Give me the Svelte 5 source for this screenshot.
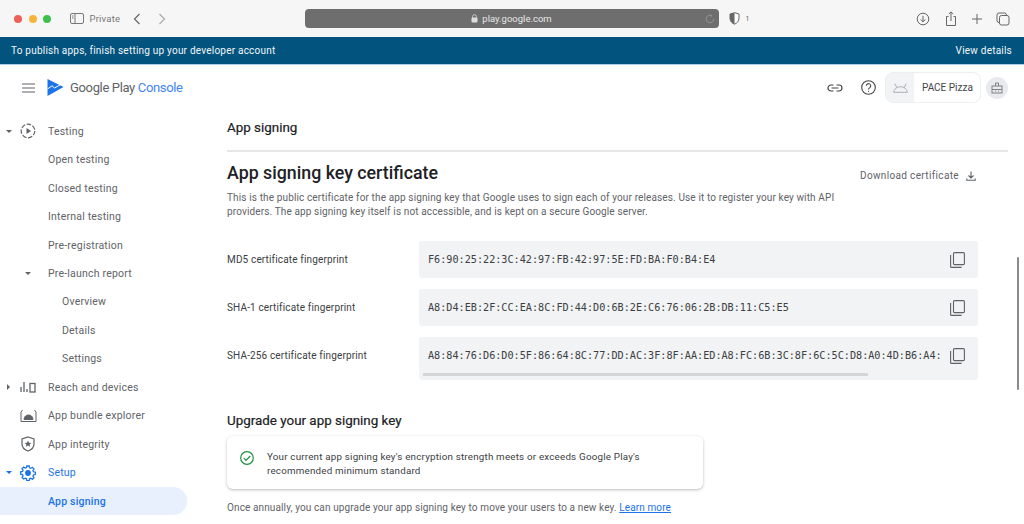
<script>
  // sidebar rows: arrow = down/right/none, icon = key of the svg to draw
  const nav = [
    { label: "Testing", arrow: "down", icon: "testing" },
    { label: "Open testing" },
    { label: "Closed testing" },
    { label: "Internal testing" },
    { label: "Pre-registration" },
    { label: "Pre-launch report", icon: "caret" },
    { label: "Overview", sub: true },
    { label: "Details", sub: true },
    { label: "Settings", sub: true },
    { label: "Reach and devices", arrow: "right", icon: "reach" },
    { label: "App bundle explorer", icon: "bundle" },
    { label: "App integrity", icon: "integrity" },
    { label: "Setup", arrow: "down", icon: "setup", blue: true },
    { label: "App signing", active: true }
  ];

  const prints = [
    { label: "MD5 certificate fingerprint", value: "F6:90:25:22:3C:42:97:FB:42:97:5E:FD:BA:F0:B4:E4" },
    { label: "SHA-1 certificate fingerprint", value: "A8:D4:EB:2F:CC:EA:8C:FD:44:D0:6B:2E:C6:76:06:2B:DB:11:C5:E5" },
    {
      label: "SHA-256 certificate fingerprint",
      value: "A8:84:76:D6:D0:5F:86:64:8C:77:DD:AC:3F:8F:AA:ED:A8:FC:6B:3C:8F:6C:5C:D8:A0:4D:B6:A4:",
      scroll: true
    }
  ];
</script>

<div class="page">
  <header class="toolbar">
    <span class="light red"></span>
    <span class="light amber"></span>
    <span class="light green"></span>
    <svg class="t-side" width="14" height="12" viewBox="0 0 14 12" fill="none" stroke="#777" stroke-width="1">
      <rect x="0.5" y="0.5" width="13" height="10" rx="1.5" />
      <path d="M5 .5v10M2 3h1.5M2 5h1.5" />
    </svg>
    <span class="private">Private</span>
    <svg class="t-back" width="8" height="12" viewBox="0 0 8 12" fill="none" stroke="#666" stroke-width="1.2">
      <path d="M6.5 1 1.5 6l5 5" />
    </svg>
    <svg class="t-fwd" width="8" height="12" viewBox="0 0 8 12" fill="none" stroke="#aaa" stroke-width="1.2">
      <path d="M1.5 1l5 5-5 5" />
    </svg>
    <div class="address">
      <svg width="7" height="9" viewBox="0 0 7 9" fill="#ddd">
        <rect x="0.5" y="3.5" width="6" height="5" rx="1" />
        <path d="M1.6 4V2.6a1.9 1.9 0 0 1 3.8 0V4" fill="none" stroke="#ddd" stroke-width=".8" />
      </svg>
      <span>play.google.com</span>
      <svg class="reload" width="10" height="10" viewBox="0 0 10 10" fill="none" stroke="#9a9a9a" stroke-width=".9">
        <path d="M8.8 5a3.8 3.8 0 1 1-2-3.4M5.6.4l1.3 1.2-1.4 1" />
      </svg>
    </div>
    <svg class="t-shield" width="11" height="13" viewBox="0 0 11 13">
      <path d="M5.5.7 10 2v4.2c0 3-2 5-4.5 6C3 11.2 1 9.2 1 6.2V2z" fill="#fff" stroke="#666" />
      <path d="M5.5.7V12.2C3 11.2 1 9.2 1 6.2V2z" fill="#666" />
    </svg>
    <span class="shield-count">1</span>
    <span class="spacer"></span>
    <svg class="t-icon" width="14" height="14" viewBox="0 0 14 14" fill="none" stroke="#666" stroke-width="1">
      <circle cx="7" cy="7" r="5.8" />
      <path d="M7 3.8v6M4.6 7.5 7 9.8l2.4-2.3" />
    </svg>
    <svg class="t-icon" width="14" height="16" viewBox="0 0 14 16" fill="none" stroke="#666" stroke-width="1">
      <path d="M4.5 5.5H2.5v9h9v-9h-2M7 10V1M4.8 3 7 .9 9.2 3" />
    </svg>
    <svg class="t-icon tight" width="14" height="14" viewBox="0 0 14 14" fill="none" stroke="#666" stroke-width="1">
      <path d="M7 2v10M2 7h10" />
    </svg>
    <svg class="t-icon tight last" width="14" height="14" viewBox="0 0 14 14" fill="none" stroke="#666" stroke-width="1">
      <rect x="3.5" y="3.5" width="9.5" height="9.5" rx="2" />
      <path d="M3.5 10.5H3a2 2 0 0 1-2-2V3a2 2 0 0 1 2-2h5.5a2 2 0 0 1 2 2v.5" />
    </svg>
  </header>

  <div class="banner">
    <span>To publish apps, finish setting up your developer account</span>
    <span>View details</span>
  </div>

  <div class="topbar">
    <svg class="menu" width="13" height="10" viewBox="0 0 13 10" fill="none" stroke="#5f6368" stroke-width="1.2">
      <path d="M0 1h13M0 5h13M0 9h13" />
    </svg>
    <svg class="logo" width="17" height="17" viewBox="0 0 17 17">
      <path d="M0.5 0 16.5 8 0.5 17z" fill="#1a73e8" />
      <path d="M0.5 10 5 6.8l2.6 2.2 5.6-3.2" fill="none" stroke="#fff" stroke-width="1" />
    </svg>
    <span class="brand">Google Play <em>Console</em></span>
    <span class="spacer"></span>
    <svg class="link" width="16" height="8" viewBox="0 0 16 8" fill="none" stroke="#444" stroke-width="1.2">
      <path d="M6.5 1H4a3 3 0 0 0 0 6h2.5M9.5 1H12a3 3 0 0 1 0 6H9.5M4.5 4h7" />
    </svg>
    <svg class="help" width="15" height="15" viewBox="0 0 15 15" fill="none" stroke="#444" stroke-width="1.1">
      <circle cx="7.5" cy="7.5" r="6.8" />
      <path d="M5.3 5.8a2.2 2.2 0 1 1 3.500 1.800c-.8.500-1.300 1-1.300 2" />
      <path d="M7.5 10.8v1" />
    </svg>
    <div class="app-chip">
      <span class="app-thumb">
        <svg width="15" height="10" viewBox="0 0 15 10" fill="none" stroke="#a4a8ac" stroke-width=".9">
          <path d="M.7 9.3h13.600a6.800 5.600 0 0 0-13.600 0zM3.800 4.500 1.800.6M11.200 4.500 13.200.6" />
        </svg>
      </span>
      <span>PACE Pizza</span>
    </div>
    <span class="account">
      <svg width="12" height="12" viewBox="0 0 12 12" fill="none" stroke="#777" stroke-width=".9">
        <rect x="1" y="4" width="10" height="7" />
        <path d="M4.5 4V1h3v3M1 7.500h10M4 9h1M7 9h1" />
      </svg>
    </span>
  </div>

  <div class="body">
    <nav class="sidebar">
      {#each nav as item}
        <div class="row" class:active={item.active} class:blue={item.blue}>
          <span class="arrow-slot">
            {#if item.arrow === "down"}<i class="caret"></i>{/if}
            {#if item.arrow === "right"}<i class="caret right"></i>{/if}
          </span>
          <span class="icon-slot">
            {#if item.icon === "caret"}
              <i class="caret"></i>
            {:else if item.icon === "testing"}
              <svg width="16" height="16" viewBox="0 0 16 16" fill="none" stroke="#5f6368" stroke-width="1.2">
                <circle cx="8" cy="8" r="6.8" stroke-dasharray="4.5 1.6" />
                <path d="M6.5 5v6L11 8z" fill="#5f6368" stroke="none" />
              </svg>
            {:else if item.icon === "reach"}
              <svg width="16" height="12" viewBox="0 0 16 12" fill="none" stroke="#5f6368" stroke-width="1.3">
                <path d="M1 6v5M4 1v10M7 8v3" />
                <rect x="10" y="2.5" width="5" height="8.5" />
              </svg>
            {:else if item.icon === "bundle"}
              <svg width="17" height="14" viewBox="0 0 17 14" fill="none" stroke="#5f6368" stroke-width="1">
                <path d="M2.5 1 1 3v9.500h15V3l-1.500-2" />
                <path d="M4 10.500a4.500 4.500 0 0 1 9 0z" fill="#5f6368" />
              </svg>
            {:else if item.icon === "integrity"}
              <svg width="14" height="16" viewBox="0 0 14 16" fill="none" stroke="#5f6368" stroke-width="1.2">
                <path d="M7 1 13 3v5c0 3.300-2.500 5.800-6 7-3.500-1.200-6-3.700-6-7V3z" />
                <path d="M7 4.500l1 2.200 2.300.2-1.700 1.500.5 2.300L7 9.500l-2.100 1.200.5-2.300-1.700-1.500 2.300-.2z" fill="#5f6368" stroke="none" />
              </svg>
            {:else if item.icon === "setup"}
              <svg width="16" height="16" viewBox="0 0 24 24" fill="none" stroke="#1a73e8" stroke-width="1.9">
                <path d="M10.200 2h3.600l.5 2.800 1.900.8 2.300-1.600 2.500 2.500-1.600 2.300.8 1.900 2.800.5v3.600l-2.800.5-.8 1.900 1.600 2.300-2.500 2.500-2.300-1.600-1.900.8-.5 2.800h-3.600l-.5-2.800-1.900-.8L5.500 21.500 3 19l1.600-2.300-.8-1.900L1 14.300v-3.600l2.800-.5.800-1.900L3 6 5.500 3.500l2.300 1.600 1.900-.8z" transform="translate(0 -.5)" />
                <circle cx="12" cy="12" r="3.4" fill="#1a73e8" />
              </svg>
            {/if}
          </span>
          <span class="label" class:sub={item.sub}>{item.label}</span>
        </div>
      {/each}
    </nav>

    <main class="main">
      <div class="page-title">App signing</div>

      <section class="cert">
        <div class="cert-head">
          <h2>App signing key certificate</h2>
          <span class="download">
            Download certificate
            <svg width="10" height="10" viewBox="0 0 10 10" fill="none" stroke="#5f6368" stroke-width="1.1">
              <path d="M5 .5v6.300M2.500 4.500 5 6.900l2.500-2.400M.8 7.500v1.700h8.400V7.500" />
            </svg>
          </span>
        </div>
        <p class="desc">
          This is the public certificate for the app signing key that Google uses to sign each of your releases. Use it to register your key with API providers. The app signing key itself is not accessible, and is kept on a secure Google server.
        </p>

        <div class="prints">
          {#each prints as p}
            <div class="print-label">{p.label}</div>
            <div class="print-box" class:scroll={p.scroll}>
              <div class="print-line">
                <code>{p.value}</code>
                <svg width="15" height="16" viewBox="0 0 15 16" fill="none" stroke="#5f6368" stroke-width="1.1">
                  <rect x="3.5" y="0.6" width="10.9" height="12" rx="1" />
                  <path d="M.6 3v11.400a1 1 0 0 0 1 1h10" />
                </svg>
              </div>
              {#if p.scroll}<div class="thumb"></div>{/if}
            </div>
          {/each}
        </div>

        <h3>Upgrade your app signing key</h3>
        <div class="notice">
          <svg width="14" height="14" viewBox="0 0 14 14" fill="none" stroke="#1e8e3e" stroke-width="1.2">
            <circle cx="7" cy="7" r="6.3" />
            <path d="M3.8 7.2 6 9.400l4.200-4.400" />
          </svg>
          <span>Your current app signing key's encryption strength meets or exceeds Google Play's recommended minimum standard</span>
        </div>
        <p class="annual">Once annually, you can upgrade your app signing key to move your users to a new key. <a href="#learn">Learn more</a></p>
      </section>
    </main>
  </div>

  <div class="page-scrollbar"></div>
</div>

<style>
  :global(body) {
    margin: 0;
    background: #fff;
  }
  .page {
    position: relative;
    width: 1024px;
    height: 524px;
    overflow: hidden;
    display: flex;
    flex-direction: column;
    font-family: Roboto, "Liberation Sans", sans-serif;
    color: #5f6368;
  }
  .spacer {
    flex: 1;
  }

  /* browser chrome */
  .toolbar {
    height: 37px;
    flex: none;
    box-sizing: border-box;
    background: #f6f6f6;
    display: flex;
    align-items: center;
    padding-left: 14px;
  }
  .light {
    width: 8px;
    height: 8px;
    border-radius: 50%;
    margin-right: 6.5px;
  }
  .red { background: #ee5f57; }
  .amber { background: #f5b53c; }
  .green { background: #3fc04e; }
  .t-side { margin-left: 12px; }
  .private {
    margin-left: 6px;
    font-size: 9.5px;
    color: #777;
    letter-spacing: 0.2px;
    width: 31px;
  }
  .t-back { margin-left: 12px; }
  .t-fwd { margin-left: 17px; }
  .address {
    margin-left: 139px;
    width: 414px;
    height: 19px;
    background: #6e6e6e;
    border-radius: 4px;
    display: flex;
    align-items: center;
    justify-content: center;
    gap: 4px;
    color: #e6e6e6;
    font-size: 9.5px;
    position: relative;
  }
  .reload {
    position: absolute;
    right: 4px;
    top: 5px;
  }
  .t-shield { margin-left: 10px; }
  .shield-count {
    margin-left: 6px;
    font-size: 7px;
    color: #666;
  }
  .t-icon { margin-left: 14px; }
  .t-icon.tight { margin-left: 12px; }
  .t-icon.last { margin-right: 14px; }

  .banner {
    height: 28px;
    flex: none;
    box-sizing: border-box;
    background: #02547f;
    border-bottom: 1px solid #a9d2ea;
    color: #f2f6f8;
    font-size: 10px;
    letter-spacing: 0.22px;
    display: flex;
    align-items: center;
    justify-content: space-between;
    padding: 0 12px 0 11px;
  }

  /* console header */
  .topbar {
    height: 45px;
    flex: none;
    display: flex;
    align-items: center;
    padding-right: 16px;
  }
  .menu { margin-left: 22px; }
  .logo { margin-left: 12px; }
  .brand {
    margin-left: 6px;
    font-size: 13px;
    color: #5f6368;
    letter-spacing: -0.35px;
  }
  .brand em {
    font-style: normal;
    color: #4285f4;
  }
  .link { margin-right: 18px; }
  .help { margin-right: 9px; }
  .app-chip {
    height: 31px;
    width: 96px;
    box-sizing: border-box;
    border: 1px solid #eceef0;
    border-radius: 8px;
    display: flex;
    align-items: center;
    gap: 8px;
    font-size: 10px;
    color: #444;
  }
  .app-thumb {
    width: 28px;
    height: 29px;
    background: #f1f3f4;
    border-radius: 7px 0 0 7px;
    display: flex;
    align-items: center;
    justify-content: center;
  }
  .account {
    width: 22px;
    height: 22px;
    margin-left: 5px;
    border-radius: 50%;
    background: #e8eaed;
    display: flex;
    align-items: center;
    justify-content: center;
  }

  .body {
    flex: 1;
    display: flex;
    min-height: 0;
  }

  /* sidebar */
  .sidebar {
    width: 200px;
    flex: none;
    box-sizing: border-box;
    padding-top: 7px;
  }
  .row {
    height: 28.46px;
    width: 187px;
    display: flex;
    align-items: center;
    font-size: 10.5px;
    letter-spacing: 0.2px;
    color: #5f6368;
  }
  .row.blue { color: #1a73e8; }
  .row.active {
    background: #e8f0fe;
    border-radius: 0 14px 14px 0;
    color: #1a73e8;
    font-weight: 500;
  }
  .arrow-slot {
    width: 17px;
    display: flex;
    justify-content: center;
  }
  .icon-slot {
    width: 31px;
    padding-right: 9px;
    box-sizing: border-box;
    display: flex;
    justify-content: center;
    align-items: center;
  }
  .label.sub { margin-left: 14px; }
  .caret {
    width: 0;
    height: 0;
    border-left: 3.5px solid transparent;
    border-right: 3.5px solid transparent;
    border-top: 3.5px solid #5f6368;
  }
  .blue .caret { border-top-color: #1a73e8; }
  .caret.right {
    border-top: 3.5px solid transparent;
    border-bottom: 3.5px solid transparent;
    border-left: 3.5px solid #5f6368;
    border-right: 0;
  }

  /* main column */
  .main {
    flex: 1;
    min-width: 0;
    padding: 0 16px 0 27px;
  }
  .page-title {
    height: 42px;
    box-sizing: border-box;
    padding-top: 10px;
    border-bottom: 2px solid #e6e7e8;
    font-size: 13.4px;
    color: #202124;
    -webkit-text-stroke: 0.2px #202124;
  }
  .cert { padding-right: 30px; }
  .cert-head {
    display: flex;
    justify-content: space-between;
    align-items: center;
    height: 39px;
  }
  h2 {
    margin: 2px 0 0;
    font-size: 17.8px;
    font-weight: 500;
    color: #202124;
  }
  .download {
    display: flex;
    align-items: center;
    gap: 7px;
    margin: 8px 2px 0 0;
    font-size: 10px;
    letter-spacing: 0.35px;
  }
  .desc {
    margin: 0;
    width: 612px;
    font-size: 10px;
    line-height: 14.2px;
    letter-spacing: 0.13px;
  }
  .prints {
    margin-top: 22px;
    display: grid;
    grid-template-columns: 192px 1fr;
    row-gap: 11px;
    align-items: start;
  }
  .print-label {
    height: 37px;
    line-height: 38px;
    font-size: 10px;
    letter-spacing: 0.15px;
    color: #3c4043;
  }
  .print-box {
    height: 37px;
    min-width: 0;
    background: #f1f3f4;
    border-radius: 3px;
    padding: 0 13px 0 9px;
  }
  .print-box.scroll {
    height: 43px;
  }
  .print-line {
    height: 37px;
    display: flex;
    align-items: center;
    gap: 9px;
  }
  code {
    flex: 1;
    min-width: 0;
    overflow: hidden;
    white-space: nowrap;
    font-family: "DejaVu Sans Mono", "Liberation Mono", monospace;
    font-size: 10.17px;
    margin-top: -1px;
    color: #3c4043;
  }
  .thumb {
    width: 445px;
    height: 3px;
    margin: -1px 0 0 -5px;
    background: #d3d5d7;
  }
  h3 {
    margin: 32px 0 0;
    font-size: 13.4px;
    line-height: 17px;
    font-weight: 400;
    color: #202124;
    -webkit-text-stroke: 0.2px #202124;
  }
  .notice {
    margin-top: 7px;
    width: 476px;
    height: 53px;
    box-sizing: border-box;
    padding: 3px 40px 0 13px;
    border-radius: 6px;
    box-shadow: 0 1px 3px rgba(60, 64, 67, 0.35);
    display: flex;
    align-items: center;
    gap: 13px;
    font-size: 9.8px;
    line-height: 14px;
    letter-spacing: 0.2px;
    color: #3c4043;
  }
  .notice svg { flex: none; margin-top: -13px; }
  .annual {
    margin: 12px 0 0;
    font-size: 10px;
    line-height: 14px;
    letter-spacing: 0.12px;
  }
  .annual a { color: #1a73e8; }

  .page-scrollbar {
    position: absolute;
    left: 1017px;
    top: 257px;
    width: 2px;
    height: 133px;
    background: #8a8a8a;
    border-radius: 1px;
  }
</style>
